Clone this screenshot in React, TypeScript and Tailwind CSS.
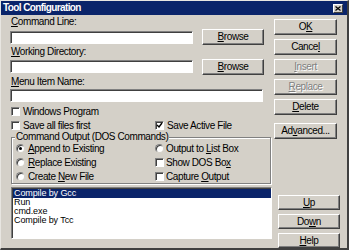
import React from "react";

function U({ children }: { children: React.ReactNode }) {
  return <span className="underline underline-offset-[1px] decoration-1">{children}</span>;
}

function Btn({
  children,
  disabled = false,
  className = "",
}: {
  children: React.ReactNode;
  disabled?: boolean;
  className?: string;
}) {
  return (
    <div
      className={`flex items-center justify-center bg-[#d4d0c8] border border-t-white border-l-white border-r-[#404040] border-b-[#404040] shadow-[inset_-1px_-1px_0_#808080] leading-none ${
        disabled ? "text-[#808080] [text-shadow:1px_1px_0_#fff]" : "text-black"
      } ${className}`}
    >
      {children}
    </div>
  );
}

const sunken =
  "bg-white border border-t-[#808080] border-l-[#808080] border-r-white border-b-white shadow-[inset_1px_1px_0_#404040]";

function Check({ checked = false }: { checked?: boolean }) {
  return (
    <div className={`w-[9px] h-[9px] shrink-0 flex items-center justify-center ${sunken}`}>
      {checked && (
        <svg width="7" height="7" viewBox="0 0 7 7">
          <path d="M1 3 L3 5 L6 1" stroke="#000" strokeWidth="1.4" fill="none" />
        </svg>
      )}
    </div>
  );
}

function Radio({ checked = false }: { checked?: boolean }) {
  return (
    <div className="w-[9px] h-[9px] shrink-0 rounded-full bg-white border border-t-[#808080] border-l-[#808080] border-r-[#d4d0c8] border-b-[#d4d0c8] shadow-[inset_1px_1px_0_#404040] flex items-center justify-center">
      {checked && <div className="w-[3px] h-[3px] rounded-full bg-black" />}
    </div>
  );
}

function Label({ children }: { children: React.ReactNode }) {
  return <div className="h-[14px] leading-[14px] pl-[1px]">{children}</div>;
}

export default function App() {
  const items = ["Compile by Gcc", "Run", "cmd.exe", "Compile by Tcc"];
  return (
    <div className="w-[349px] h-[250px] bg-[#d4d0c8] border-t border-l border-t-[#e8e6e1] border-l-[#e8e6e1] border-r-2 border-b-2 border-r-[#404040] border-b-[#404040] flex flex-col font-['Liberation_Sans',Arial,sans-serif] text-[10px] tracking-[-0.4px] text-black overflow-hidden">
      {/* title bar */}
      <div className="h-[14px] bg-[#0a246a] flex items-center justify-between pl-[2px] pr-[4px]">
        <span className="text-white font-bold text-[10px] tracking-[-0.6px] leading-none">Tool Configuration</span>
        <div className="w-[10px] h-[9px] bg-[#d4d0c8] border border-t-white border-l-white border-r-[#404040] border-b-[#404040] flex items-center justify-center">
          <svg width="6" height="5" viewBox="0 0 6 5">
            <path d="M0.5 0.5 L5.5 4.5 M5.5 0.5 L0.5 4.5" stroke="#000" strokeWidth="1.2" />
          </svg>
        </div>
      </div>

      <div className="flex flex-1">
        {/* left column */}
        <div className="w-[270px] pl-[9px] flex flex-col">
          <Label>
            <U>C</U>ommand Line:
          </Label>
          <div className="flex h-[16px]">
            <div className={`w-[183px] h-[13px] mt-[2px] ${sunken}`} />
            <Btn className="ml-[9px] w-[62px] h-[16px]">
              <span>
                <U>B</U>rowse
              </span>
            </Btn>
          </div>
          <Label>
            <U>W</U>orking Directory:
          </Label>
          <div className="flex h-[16px]">
            <div className={`w-[183px] h-[13px] mt-[1px] ${sunken}`} />
            <Btn className="ml-[9px] w-[62px] h-[16px]">
              <span>
                <U>B</U>rowse
              </span>
            </Btn>
          </div>
          <Label>
            <U>M</U>enu Item Name:
          </Label>
          <div className={`w-[253px] h-[13px] ${sunken}`} />

          <div className="flex items-center h-[14px] mt-[2px] pl-[1px]">
            <Check />
            <span className="ml-[3px]">Windows Program</span>
          </div>
          <div className="flex items-center h-[14px] pl-[1px]">
            <div className="flex items-center w-[144px]">
              <Check />
              <span className="ml-[3px]">Save all files first</span>
            </div>
            <Check checked />
            <span className="ml-[3px]">Save Active File</span>
          </div>

          <fieldset className="ml-[1px] w-[260px] border border-[#808080] shadow-[inset_1px_1px_0_#fff,1px_1px_0_#fff] px-0 pb-0 -mt-[1px]">
            <legend className="ml-[3px] px-[1px] h-[12px] leading-[12px] bg-[#d4d0c8]">
              Command Output (DOS Commands)
            </legend>
            <div className="flex -mt-[2px] pl-[4px]">
              <div className="w-[139px] flex flex-col">
                <div className="flex items-center h-[14px]">
                  <Radio checked />
                  <span className="ml-[3px]">
                    <U>A</U>ppend to Existing
                  </span>
                </div>
                <div className="flex items-center h-[14px]">
                  <Radio />
                  <span className="ml-[3px]">
                    <U>R</U>eplace Existing
                  </span>
                </div>
                <div className="flex items-center h-[14px]">
                  <Radio />
                  <span className="ml-[3px]">
                    Create <U>N</U>ew File
                  </span>
                </div>
              </div>
              <div className="flex flex-col">
                <div className="flex items-center h-[14px]">
                  <Radio />
                  <span className="ml-[2px]">
                    Output to <U>L</U>ist Box
                  </span>
                </div>
                <div className="flex items-center h-[14px]">
                  <Check />
                  <span className="ml-[2px]">
                    Show DOS Bo<U>x</U>
                  </span>
                </div>
                <div className="flex items-center h-[14px]">
                  <Check />
                  <span className="ml-[2px]">
                    Capture <U>O</U>utput
                  </span>
                </div>
              </div>
            </div>
          </fieldset>

          <div className="ml-[1px] mt-[3px] w-[261px] h-[52px] bg-white border border-t-[#808080] border-l-[#808080] border-r-white border-b-white shadow-[inset_1px_1px_0_#404040] pt-[1px] pl-[1px] flex flex-col text-[9px] tracking-[-0.1px] leading-[9px]">
            {items.map((it, i) => (
              <div
                key={it}
                className={`h-[9px] pl-[1px] ${i === 0 ? "bg-[#0a246a] text-white" : "text-black"}`}
              >
                {it}
              </div>
            ))}
          </div>
        </div>

        {/* right column */}
        <div className="flex flex-col flex-1">
          <div className="flex flex-col gap-[4px] ml-[3px] mt-[4px]">
            <Btn className="w-[63px] h-[16px]">
              <span>
                O<U>K</U>
              </span>
            </Btn>
            <Btn className="w-[63px] h-[16px]">
              <span>
                Cance<U>l</U>
              </span>
            </Btn>
            <Btn disabled className="w-[63px] h-[16px]">
              <span>
                <U>I</U>nsert
              </span>
            </Btn>
            <Btn disabled className="w-[63px] h-[16px]">
              <span>
                <U>R</U>eplace
              </span>
            </Btn>
            <Btn className="w-[63px] h-[16px]">
              <span>
                <U>D</U>elete
              </span>
            </Btn>
            <Btn className="w-[63px] h-[16px] mt-[4px]">
              <span>
                Ad<U>v</U>anced...
              </span>
            </Btn>
          </div>
          <div className="flex-1" />
          <div className="flex flex-col gap-[4px] ml-[7px]">
            <Btn className="w-[62px] h-[15px]">
              <span>
                <U>U</U>p
              </span>
            </Btn>
            <Btn className="w-[62px] h-[15px]">
              <span>
                Do<U>w</U>n
              </span>
            </Btn>
            <Btn className="w-[62px] h-[15px]">
              <span>
                <U>H</U>elp
              </span>
            </Btn>
          </div>
        </div>
      </div>
    </div>
  );
}
